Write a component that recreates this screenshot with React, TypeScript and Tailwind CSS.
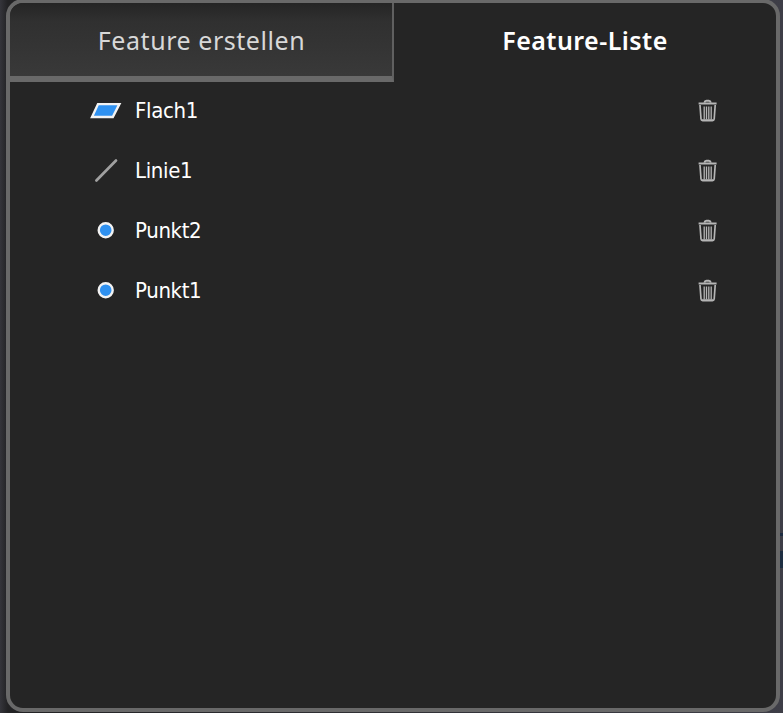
import React from "react";

type Kind = "plane" | "line" | "point";

const features: { name: string; kind: Kind }[] = [
  { name: "Flach1", kind: "plane" },
  { name: "Linie1", kind: "line" },
  { name: "Punkt2", kind: "point" },
  { name: "Punkt1", kind: "point" },
];

function FeatureIcon({ kind }: { kind: Kind }) {
  return (
    <svg width="34" height="30" viewBox="0 0 34 30" className="shrink-0">
      {kind === "plane" && (
        <path d="M9 9.1H30.4L23.8 22H3Z" fill="#2f91f0" stroke="#f2f2f2" strokeWidth="2.4" />
      )}
      {kind === "line" && (
        <path d="M7.4 25.5L27 5.5" stroke="#a0a0a0" strokeWidth="2.7" strokeLinecap="round" />
      )}
      {kind === "point" && (
        <circle cx="16.7" cy="15.2" r="7" fill="#2f91f0" stroke="#f2f2f2" strokeWidth="2.4" />
      )}
    </svg>
  );
}

function TrashIcon() {
  return (
    <svg width="20" height="24" viewBox="0 0 20 24" fill="none" stroke="#b5b5b5">
      <path d="M6.4 4.6Q6.8 2.7 8.4 2.7H10.8Q12.4 2.7 12.8 4.6" strokeWidth="2" />
      <path d="M.6 5.5H18.6" strokeWidth="2" />
      <path d="M2 7L3 21Q3.2 22.6 4.6 22.6H14.6Q16 22.6 16.2 21L17.2 7" strokeWidth="1.7" />
      <path d="M6.2 8.5V21.5M8.5 8.5V21.5M10.8 8.5V21.5M13.2 8.5V21.5" strokeWidth="1.3" />
      <path d="M4 21.5H15.4" strokeWidth="1.2" opacity=".7" />
    </svg>
  );
}

export default function App() {
  return (
    <div className="flex h-[713px] w-[783px] overflow-hidden bg-linear-to-r from-[#35353b] from-0% via-[#222224] via-1% to-[#3e3e47] font-['Noto_Sans',sans-serif]">
      <main className="-mt-px ml-[6px] flex h-[713px] w-[774px] shrink-0 flex-col overflow-hidden rounded-[17px] border-4 border-[#696969] bg-[#252525]">
        <nav className="flex h-[79px] shrink-0">
          <button className="flex h-[79px] w-[384px] items-center justify-center border-r-2 border-b-[6px] border-[#606060] border-b-[#696969] bg-linear-to-b from-[#252525] via-[#303030] via-25% to-[#393939] pt-px pl-px text-[25px] leading-none tracking-[0.55px] text-[#d8d8d8]">
            Feature erstellen
          </button>
          <button className="flex h-[73px] flex-1 items-center justify-center pt-px text-[25px] leading-none font-semibold tracking-[0.45px] text-white">
            Feature-Liste
          </button>
        </nav>
        <ul className="pt-[13px] pr-[58px] pl-[79px]">
          {features.map((feature) => (
            <li key={feature.name} className="mb-[30px] flex h-[30px] items-center">
              <FeatureIcon kind={feature.kind} />
              <span className="ml-3 flex-1 pt-[2px] font-['DejaVu_Sans_Condensed','DejaVu_Sans',sans-serif] text-[22px] leading-[30px] font-stretch-condensed tracking-[-0.35px] text-white">
                {feature.name}
              </span>
              <button aria-label="Löschen">
                <TrashIcon />
              </button>
            </li>
          ))}
        </ul>
      </main>
      <div className="flex w-[3px] shrink-0 flex-col pt-[533px]">
        <span className="h-[3px] bg-[#1d2c42]" />
        <span className="mt-[15px] h-[17px] bg-[#1e2e42]" />
      </div>
    </div>
  );
}
